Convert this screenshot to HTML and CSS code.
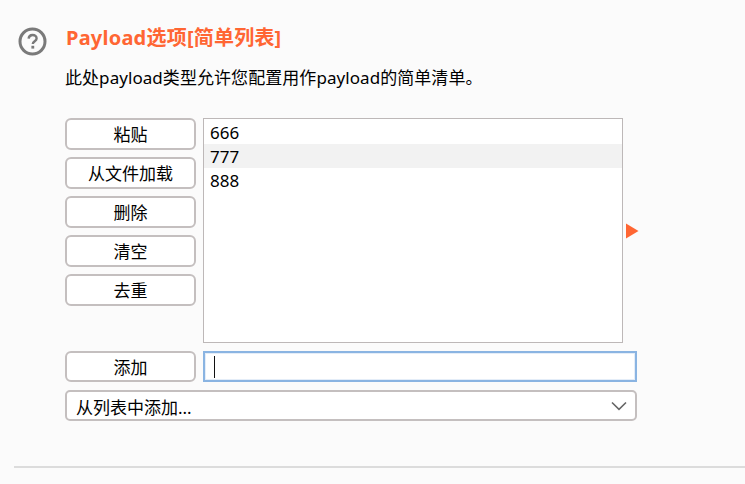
FILE: index.html
```html
<!DOCTYPE html>
<html lang="zh-CN">
<head>
<meta charset="utf-8">
<title>Payload选项</title>
<link rel="stylesheet" href="styles.css">
</head>
<body>
<main class="panel">
  <section class="section">
    <svg class="help" width="30" height="30" viewBox="0 0 30 30" aria-hidden="true">
      <circle cx="14.5" cy="14.5" r="12.5" fill="none" stroke="#7a7a7a" stroke-width="3"/>
      <path d="M10.6 11.6a4 4 0 0 1 4-3.6c2.3 0 4 1.5 4 3.5 0 2.7-3.8 2.9-3.8 5.6" fill="none" stroke="#7a7a7a" stroke-width="2.4"/>
      <rect x="13.4" y="18.8" width="2.8" height="2.8" fill="#7a7a7a"/>
    </svg>
    <div class="content">
      <h2 class="title">Payload选项[简单列表]</h2>
      <p class="desc">此处payload类型允许您配置用作payload的简单清单。</p>
      <div class="editor">
        <div class="buttons">
          <button class="btn">粘贴</button>
          <button class="btn">从文件加载</button>
          <button class="btn">删除</button>
          <button class="btn">清空</button>
          <button class="btn">去重</button>
        </div>
        <ul class="list">
          <li class="item">666</li>
          <li class="item item-alt">777</li>
          <li class="item">888</li>
        </ul>
        <svg class="arrow" width="13" height="16" viewBox="0 0 13 16" aria-hidden="true"><path d="M0 0.5 12.5 8 0 15.5z" fill="#ff6633"/></svg>
      </div>
      <div class="add-row">
        <button class="btn">添加</button>
        <div class="input"><span class="caret"></span></div>
      </div>
      <div class="select">
        <span class="select-label">从列表中添加...</span>
        <svg width="16" height="10" viewBox="0 0 16 10" aria-hidden="true"><path d="M1 1.5 8 8.3 15 1.5" fill="none" stroke="#666" stroke-width="1.6"/></svg>
      </div>
    </div>
  </section>
  <hr class="rule">
</main>
</body>
</html>
```
FILE: styles.css
```css
* { box-sizing: border-box; }
html, body { margin: 0; height: 100%; }
body {
  background: #fbfbfb;
  color: #000;
  font-family: "Noto Sans", "Noto Sans CJK SC", sans-serif;
  font-size: 17px;
  overflow: hidden;
}
.panel { padding: 26px 0 0 14px; }
.section { display: flex; }
.help { flex: none; margin: 1px 0 0 4px; }
.content { margin-left: 17px; width: 572px; }
.title {
  margin: 0;
  padding: 1px 0 0 1px;
  color: #ff6633;
  font-size: 20px;
  font-weight: 700;
  line-height: 22px;
  letter-spacing: 0.22px;
}
.desc { margin: 17px 0 0; line-height: 24px; font-size: 17px; letter-spacing: 0.06px; }
.editor { display: flex; margin-top: 28px; align-items: flex-start; }
.buttons { display: flex; flex-direction: column; gap: 7px; width: 131px; flex: none; }
.btn {
  display: block;
  width: 131px;
  height: 32px;
  padding: 1px 0 0;
  background: #fff;
  border: 2px solid #c4bfbf;
  border-radius: 6px;
  color: #000;
  font: inherit;
  line-height: 28px;
}
.list {
  width: 420px;
  height: 225px;
  margin: 0 0 0 7px;
  padding: 1px 0 0;
  list-style: none;
  background: #fff;
  border: 1px solid #bdb8b8;
  flex: none;
}
.item { height: 24px; line-height: 24px; padding: 1px 0 0 6px; }
.item-alt { background: #f2f2f2; }
.arrow { flex: none; margin: 105px 0 0 3px; }
.add-row { display: flex; gap: 7px; margin-top: 8px; }
.add-row .btn { height: 31px; flex: none; }
.input {
  flex: none;
  width: 434px;
  height: 31px;
  padding: 3px 0 0 9px;
  background: #fff;
  border: 2px solid #8ab4e2;
  box-shadow: inset 0 0 0 1px #e4edf8;
}
.caret { display: block; width: 1px; height: 22px; background: #111; }
.select {
  display: flex;
  align-items: center;
  justify-content: space-between;
  width: 572px;
  height: 31px;
  margin-top: 8px;
  padding: 0 8px 0 9px;
  background: #fff;
  border: 2px solid #c4bfbf;
  border-radius: 5px;
}
.select-label { padding-top: 1px; }
.rule {
  height: 2px;
  margin: 45px 0 0;
  border: 0;
  background: #dcdcdc;
}
```
